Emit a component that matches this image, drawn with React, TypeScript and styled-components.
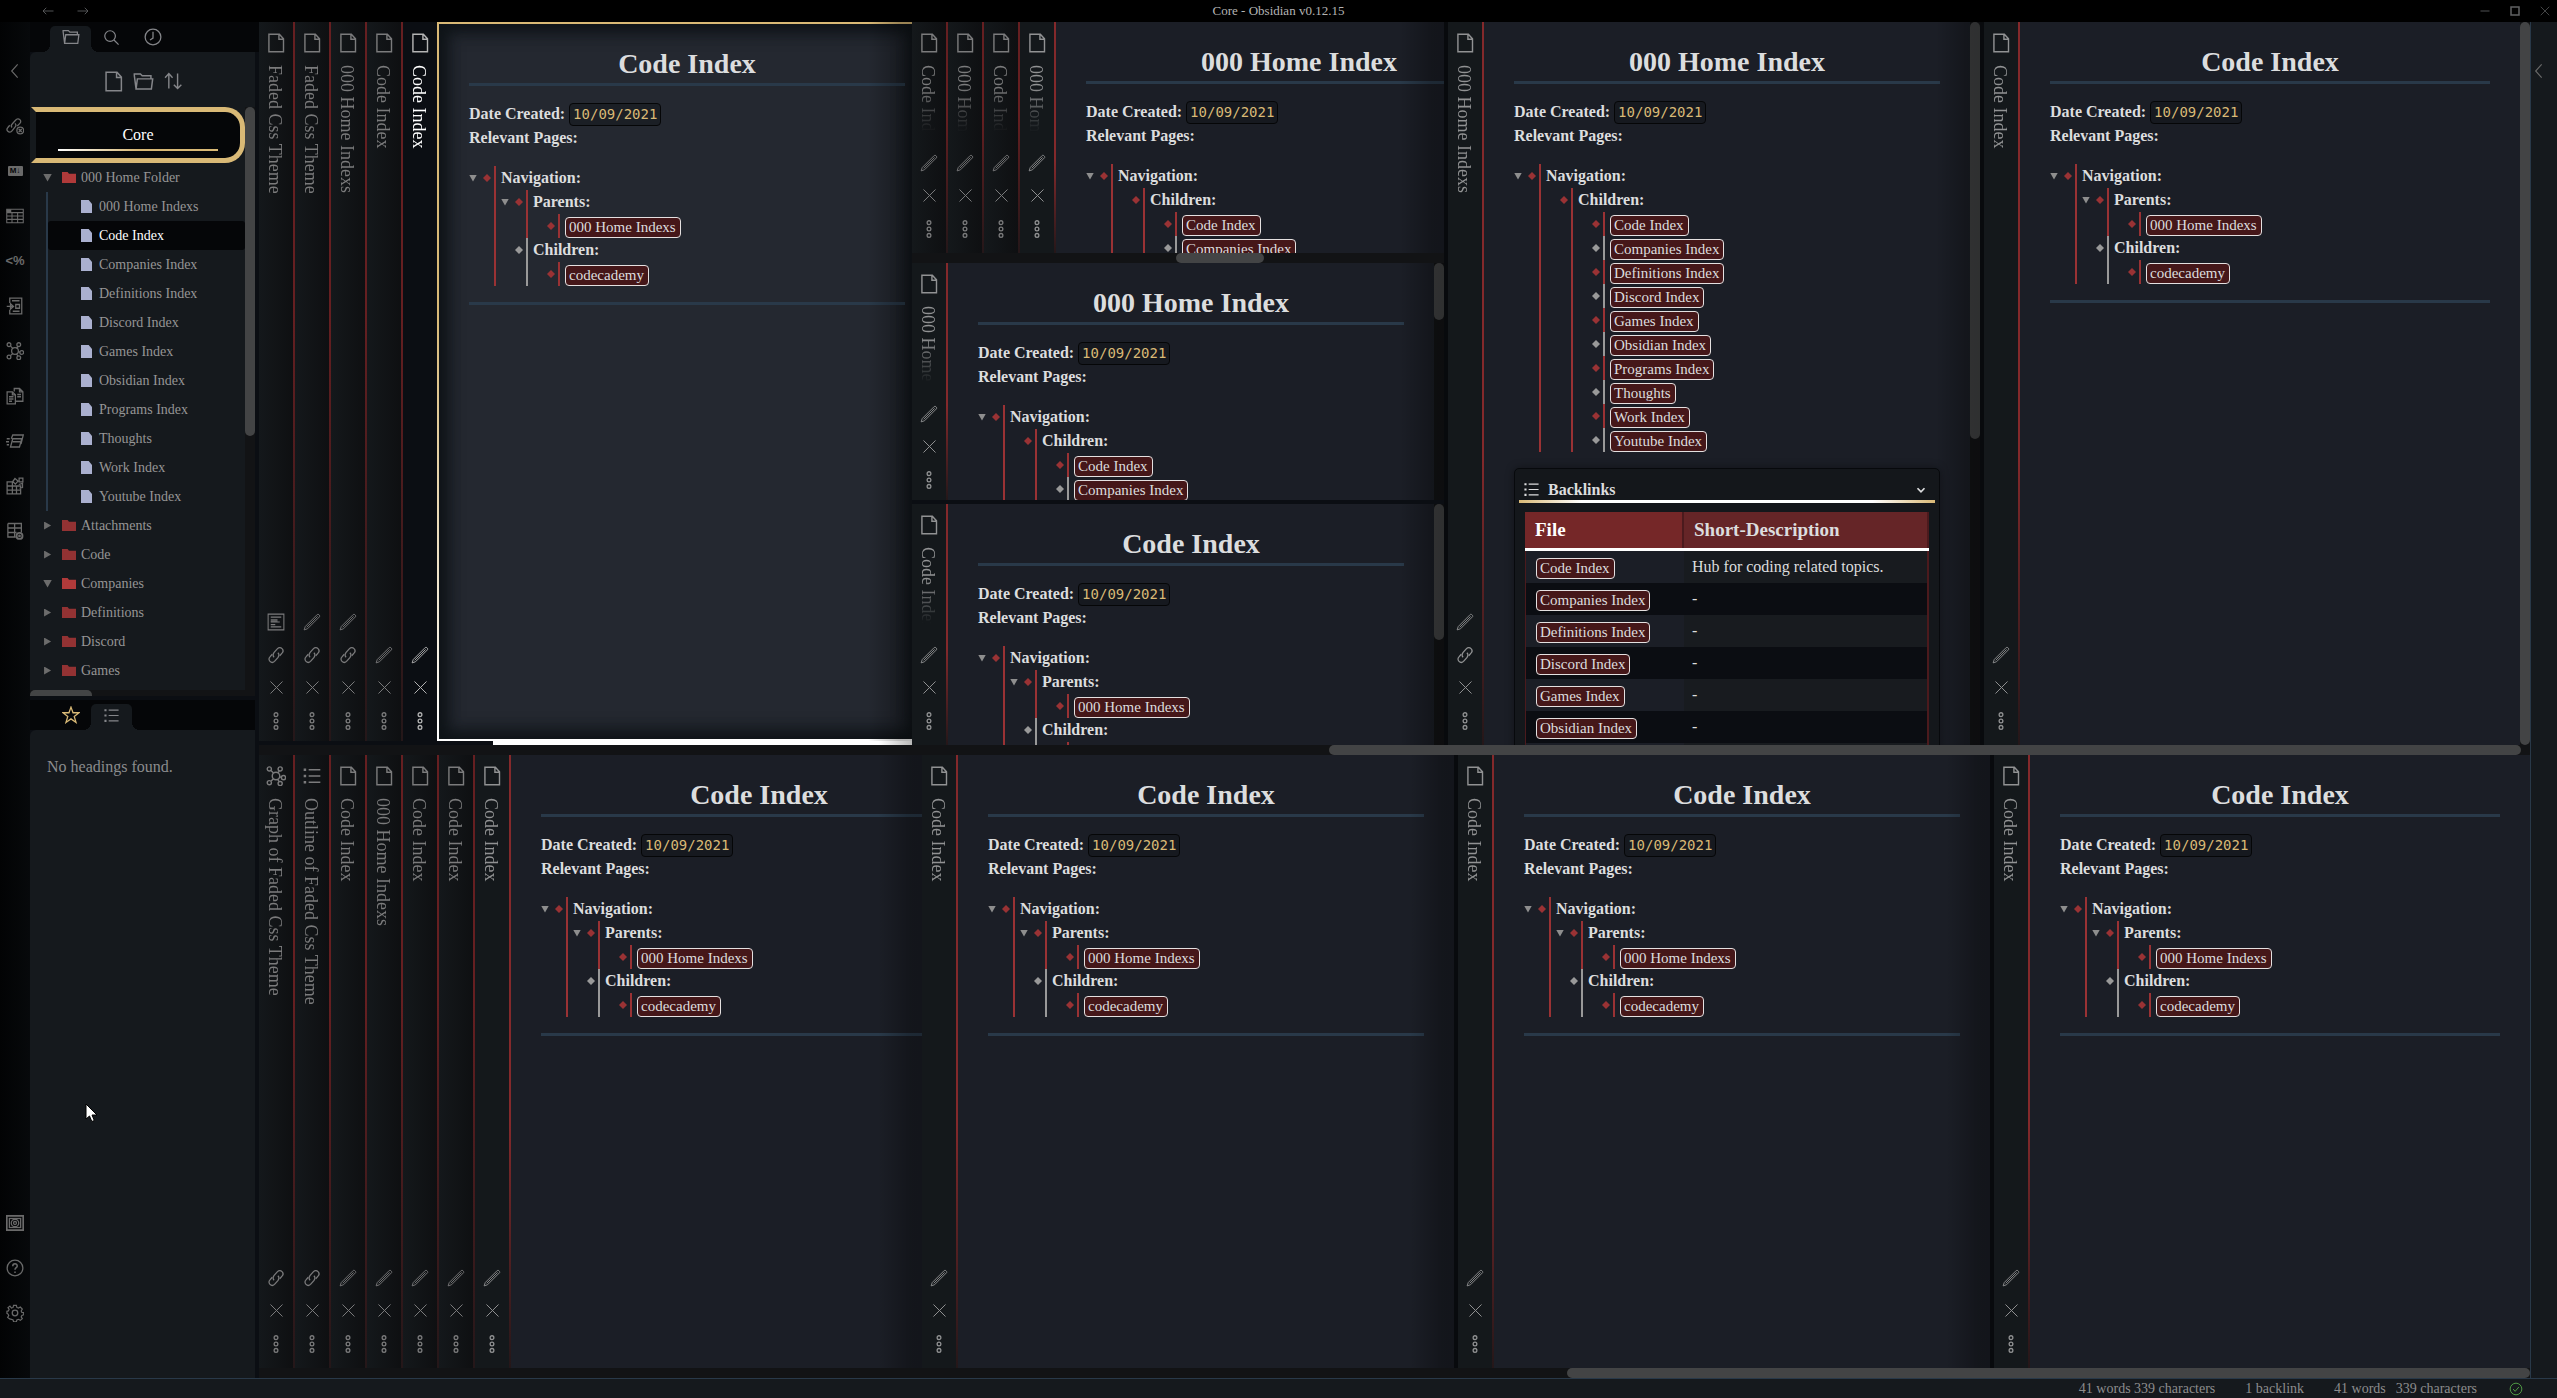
import React from "react";
import styled, { createGlobalStyle, css } from "styled-components";

const c = {
  black: "#000000",
  deep: "#050608",
  gutter: "#0b0e13",
  panel: "#15191d",
  spine: "#14181b",
  note: "#1b1e26",
  noteActive: "#242830",
  track: "#121315",
  thumb: "#434445",
  gold: "#d9b976",
  red: "#9a3234",
  slate: "#293949",
  text: "#dcddde",
  muted: "#8d8d8d",
  faint: "#606163",
};

const Global = createGlobalStyle`
  * { box-sizing: border-box; }
  html, body { margin: 0; height: 100%; background: ${c.black}; overflow: hidden; }
  body { font-family: "Liberation Serif", "Times New Roman", serif; font-size: 16px; line-height: 24px; color: ${c.text}; }
  h1, h2, p, ul { margin: 0; padding: 0; font-size: inherit; }
  ul { list-style: none; }
`;

const bare = css`
  margin: 0;
  padding: 0;
  border: 0;
  background: none;
  font: inherit;
  color: inherit;
  cursor: pointer;
`;

/* ---------- icons ---------- */

const shapes: Record<string, React.ReactNode> = {
  doc: <path d="M3.500 1.500h12.500L21 7V22.500H3.500zM15.500 1.500v6H21" />,
  folder: <path d="M3.500 20.500L1.500 5V3.500h7l2 2H20.500v3.500M3.500 20.500L5 9H22.500l-1.500 11.500z" />,
  search: (
    <>
      <circle cx="10" cy="10" r="7.500" />
      <path d="M15.500 15.500L22 22" />
    </>
  ),
  clock: (
    <>
      <circle cx="12" cy="12" r="10.500" />
      <path d="M12 5v8.500l-4 2.500" />
    </>
  ),
  sort: <path d="M7 21V3M2.500 8L7 3l4.500 5M17.500 3v18M13 16.500l4.500 4.500 4.500-4.500" />,
  star: <path d="M12 1.500l2.700 7.500h8l-6.400 4.900 2.400 8L12 17.200l-6.700 4.700 2.400-8L1.300 9h8z" />,
  list: (
    <>
      <path d="M8 4.500h14M8 12h14M8 19.500h14" />
      <path d="M2 4.500h3M2 12h3M2 19.500h3" strokeWidth="3" />
    </>
  ),
  pencil: <path d="M1.500 22.500l1.500-4.500L19 2c1.300-1.300 4.300 1.700 3 3L6 21zM5 19L19.500 4.500" strokeWidth="1.200" />,
  link: (
    <>
      <path d="M9.500 15c-2-2-1.500-4.500 0-6.500l4.500-5c2-2 4.500-1.500 6 0s2 4 0 6l-3 3.500" />
      <path d="M14.500 9c2 2 1.500 4.500 0 6.500l-4.500 5c-2 2-4.500 1.500-6 0s-2-4 0-6l3-3.500" />
    </>
  ),
  close: <path d="M3.500 3.500l17 17M20.500 3.500l-17 17" strokeWidth="1.400" />,
  dots: (
    <>
      <circle cx="12" cy="3.500" r="2.500" />
      <circle cx="12" cy="12" r="2.500" />
      <circle cx="12" cy="20.500" r="2.500" />
    </>
  ),
  reading: (
    <>
      <path d="M1.500 1.500h21v21h-21zM5 5.500h14M5 18.500h14M5 15.500h6M5 12h12" strokeWidth="1.400" />
      <path d="M5 10h9" strokeWidth="4" opacity="0.700" />
    </>
  ),
  graph: (
    <>
      <circle cx="12" cy="12" r="4.500" />
      <circle cx="4" cy="3.500" r="2.500" />
      <circle cx="17" cy="3.500" r="2.500" />
      <circle cx="21" cy="14" r="2.500" />
      <circle cx="17" cy="21" r="2.500" />
      <circle cx="4" cy="20" r="2.500" />
      <path d="M6 5.500l3 3M16 6l-2 2.500M16.500 13l2 .500M14 16l2 3M9 15.500L6 18" />
    </>
  ),
  chevron: <path d="M16 2L7 12l9 10" />,
  unlink: (
    <>
      <path d="M8 14c-1.500-1.500-1-3.500.5-5L13 4c1.500-2 4-2 5.500-.5s1.500 3.500 0 5L15 12" />
      <path d="M12 8.500c1.500 1.500 1.500 3.500 0 5L8 18.500c-1.500 2-4 2-5.500.5s-1.500-3.500 0-5L5 11" />
      <circle cx="19" cy="18" r="4.500" />
      <path d="M17 16l4 4M21 16l-4 4" />
    </>
  ),
  table: (
    <>
      <path d="M1 3h22v18H1zM1 7.500h22M1 12h22M1 16.500h22M8 7v14M15.500 7v14" strokeWidth="1.400" />
      <path d="M1 5.200h6" strokeWidth="4" />
    </>
  ),
  importer: (
    <>
      <path d="M5 8V1.500h16v21H5V17M8 5h10M9 19h9" />
      <path d="M1 12.500h8M6 9l4 3.500L6 16zM13 10h5v5h-5z" />
    </>
  ),
  copies: <path d="M1.500 6.500h7l4 4v12h-11zM8.500 6.500v4h4M11 6V2h7l4.500 4.500V19H13M18 2v4.500h4.500M4 13h6M4 16h6M4 19h4M15 10h5M15 13h5" />,
  cards: <path d="M7 9l2-5h14l-3 12M6 20l3-11h12l-3 11zM9 13h10M1 9h4M0 13h4M1 17h3" />,
  blocks: <path d="M1.500 6.500h7v16h-7zM1.500 12h18v10.500h-18zM1.500 17.500h18M8.500 12v10.500M14 12v10.500M12 2l4 3.500-3.500 4L9 6zM17.500 1.500h5v5h-5zM17 10l5-1.500V14l-4 1" />,
  gridGear: (
    <>
      <path d="M2.500 2h18v12M2.500 2v18H13M2.500 8h18M2.500 14H14M11.500 2v18" />
      <circle cx="18" cy="18.500" r="4" strokeWidth="2.500" />
      <circle cx="18" cy="18.500" r="1" />
    </>
  ),
  vault: (
    <>
      <rect x="1" y="2.500" width="22" height="19" strokeWidth="2.400" />
      <rect x="4.500" y="6" width="15" height="12" />
      <circle cx="12" cy="12" r="5" />
      <circle cx="12" cy="12" r="2" />
    </>
  ),
  help: (
    <>
      <circle cx="12" cy="12" r="10.500" />
      <path d="M9 9.500C9 5.500 15 5.500 15 9.200c0 2.300-3 2.300-3 5M12 16.500v2" strokeWidth="2" />
    </>
  ),
  gear: (
    <>
      <path d="M10 1.500h4l.7 3 2.300 1 2.700-1.500 2.800 2.800-1.600 2.700 1 2.300 2.600.200v3l-2.600 1-1 2 1.600 2.700-2.800 2.300-2.700-1.500-2.300 1-.7 2.500h-4l-.7-2.500-2.300-1L4.300 21l-2.800-2.300L3.100 16l-1-2L.500 13v-3l2.100-.500 1-2.200L2 4.800 4.800 2.500 7 5.500l2.300-1z" transform="translate(.8 .4) scale(.93)" />
      <circle cx="12" cy="12" r="3.700" />
    </>
  ),
  back: <path d="M23 12H2M8.500 5.500L2 12l6.500 6.500" />,
  forward: <path d="M1 12h21M15.500 5.500L22 12l-6.500 6.500" />,
  minimise: <path d="M3 12h18" />,
  maximise: <path d="M4 4h16v16H4z" strokeWidth="3" />,
  down: <path d="M5 8.500l7 7 7-7" strokeWidth="3.500" />,
  check: (
    <>
      <circle cx="12" cy="12" r="10" />
      <path d="M7 12l3.500 4L17 8.500" />
    </>
  ),
};

const Glyph = styled.svg`
  display: block;
  flex: none;
  fill: none;
  stroke: currentColor;
  stroke-width: 1.7;
`;

const Icon = ({ name, size = 18 }: { name: string; size?: number }) => (
  <Glyph viewBox="0 0 24 24" width={size} height={size} aria-hidden="true">
    {shapes[name]}
  </Glyph>
);

/* ---------- frame ---------- */

const Shell = styled.div`
  height: 100vh;
  display: flex;
  flex-direction: column;
  background: ${c.gutter};
`;

const TitleBar = styled.header`
  flex: none;
  height: 22px;
  display: grid;
  grid-template-columns: 1fr auto 1fr;
  align-items: center;
  background: ${c.black};
  color: ${c.faint};
`;

const TitleText = styled.h1`
  font-size: 13px;
  line-height: 22px;
  font-weight: 400;
  color: #b4b4b4;
`;

const BarGroup = styled.div<{ $end?: boolean }>`
  display: flex;
  gap: ${(p) => (p.$end ? 18 : 23)}px;
  padding: ${(p) => (p.$end ? "0 6px" : "0 42px")};
  justify-content: ${(p) => (p.$end ? "flex-end" : "flex-start")};
`;

const IconButton = styled.button`
  ${bare}
  display: grid;
  place-items: center;
`;

const Middle = styled.div`
  flex: 1;
  min-height: 0;
  display: flex;
`;

const Ribbon = styled.nav`
  flex: none;
  width: 30px;
  display: flex;
  flex-direction: column;
  padding: 26px 0 43px;
  background: linear-gradient(to right, #020304, #07090b);
  color: #6a6a6a;
`;

const RibbonButton = styled(IconButton)`
  height: 45px;
  font-family: "Liberation Sans", Arial, sans-serif;
  font-size: 13px;
  font-weight: 700;
`;

const RibbonTop = styled.div`
  display: flex;
  flex-direction: column;
  margin-bottom: 10px;
`;

const Spacer = styled.div`
  flex: 1;
`;

const MdBadge = styled.span`
  width: 15px;
  height: 10px;
  border-radius: 1px;
  background: #6a6a6a;
  color: ${c.deep};
  font-size: 8px;
  line-height: 10px;
`;

const RightRibbon = styled.nav`
  flex: none;
  width: 27px;
  padding-top: 26px;
  border-left: 1px solid ${c.slate};
  background: ${c.panel};
  color: #6a6a6a;
`;

/* ---------- sidebar ---------- */

const Sidebar = styled.aside`
  flex: none;
  width: 229px;
  display: flex;
  flex-direction: column;
  gap: 4px;
  background: ${c.gutter};
`;

const SidePanel = styled.section<{ $grow: number }>`
  flex: ${(p) => p.$grow} 1 0;
  min-height: 0;
  display: flex;
  flex-direction: column;
`;

const Tabs = styled.div<{ $wide?: boolean }>`
  flex: none;
  height: 30px;
  margin-right: ${(p) => (p.$wide ? 0 : 4)}px;
  padding: 4px 20px 0;
  display: flex;
  background: ${c.deep};
`;

const Tab = styled(IconButton)<{ $on?: boolean; $gold?: boolean }>`
  position: relative;
  width: 41px;
  height: 26px;
  padding-bottom: 4px;
  border-radius: 5px 5px 0 0;
  color: ${(p) => (p.$gold ? c.gold : "#85868a")};
  ${(p) =>
    p.$on &&
    css`
      background: ${c.panel};
      &::before,
      &::after {
        content: "";
        position: absolute;
        bottom: 0;
        width: 8px;
        height: 8px;
      }
      &::before {
        right: 100%;
        background: radial-gradient(circle at 0 0, transparent 8px, ${c.panel} 8px);
      }
      &::after {
        left: 100%;
        background: radial-gradient(circle at 100% 0, transparent 8px, ${c.panel} 8px);
      }
    `}
`;

const PanelBody = styled.div`
  flex: 1;
  min-height: 0;
  margin-right: 4px;
  display: flex;
  flex-direction: column;
  border-radius: 6px 0 0 0;
  background: ${c.panel};
`;

const ExplorerTools = styled.div`
  flex: none;
  height: 55px;
  display: flex;
  justify-content: center;
  align-items: center;
  gap: 9px;
  padding-top: 3px;
  color: #85868a;
`;

const Explorer = styled.div`
  flex: 1;
  min-height: 0;
  display: flex;
`;

const Tree = styled.div`
  flex: 1;
  min-width: 0;
  overflow: hidden;
  font-size: 14px;
  line-height: 29px;
  color: #959595;
`;

const VaultName = styled.h2`
  height: 56px;
  margin-left: 1px;
  padding: 14px 22px 0;
  border: 5px solid ${c.gold};
  border-left-color: transparent;
  border-radius: 0 20px 20px 0;
  background: ${c.deep} padding-box;
  color: #ffffff;
  font-size: 16px;
  font-weight: 400;
  line-height: 18px;
  text-align: center;
  display: flex;
  flex-direction: column;
  gap: 5px;
  &::after {
    content: "";
    height: 2px;
    background: linear-gradient(to right, #ffffff, ${c.gold} 50%, ${c.gold});
  }
`;

const Row = styled.button<{ $active?: boolean }>`
  ${bare}
  width: 100%;
  height: 29px;
  display: flex;
  align-items: center;
  text-align: left;
  border-radius: 3px;
  ${(p) => p.$active && `background: ${c.deep}; color: #ffffff;`}
`;

const FolderRow = styled(Row)`
  padding-left: 13px;
`;

const FileRow = styled(Row)`
  gap: 7px;
  padding-left: 33px;
`;

const Children = styled.ul`
  margin-left: 16px;
  border-left: 2px solid ${c.slate};
`;

const Caret = styled.span<{ $open?: boolean }>`
  flex: none;
  width: 9px;
  height: 8px;
  background: #6c6c6c;
  clip-path: ${(p) => (p.$open ? "polygon(0 0, 100% 0, 50% 100%)" : "polygon(12% 0, 90% 50%, 12% 100%)")};
`;

const FolderIcon = styled.span<{ $open?: boolean }>`
  flex: none;
  width: 14px;
  height: 11px;
  margin: 0 5px 0 10px;
  background: ${(p) => (p.$open ? "#b03a3a" : "#933233")};
  clip-path: polygon(0 0, 40% 0, 50% 15%, 100% 15%, 100% 100%, 0 100%);
`;

const FileIcon = styled.span`
  flex: none;
  width: 11px;
  height: 13px;
  background: #aab0cf;
  clip-path: polygon(0 0, 70% 0, 100% 30%, 100% 100%, 0 100%);
`;

const Empty = styled.p`
  padding: 25px 17px;
  color: #8b8c8e;
`;

/* ---------- scrollbars ---------- */

const VTrack = styled.div`
  flex: none;
  width: 10px;
  background: ${c.track};
`;

const VThumb = styled.div<{ $size: string }>`
  height: ${(p) => p.$size};
  border-radius: 5px;
  background: ${c.thumb};
`;

const HTrack = styled.div<{ $h?: number }>`
  flex: none;
  display: flex;
  height: ${(p) => p.$h ?? 10}px;
  overflow: hidden;
  background: ${c.track};
`;

const HThumb = styled.div<{ $from: string; $size: string }>`
  height: 10px;
  width: ${(p) => p.$size};
  margin-left: ${(p) => p.$from};
  border-radius: 5px;
  background: ${c.thumb};
`;

/* ---------- workspace ---------- */

const Workspace = styled.main`
  flex: 1;
  min-width: 0;
  display: flex;
  flex-direction: column;
`;

const Band = styled.div<{ $grow: number; $columns: string }>`
  flex: ${(p) => p.$grow} 1 0;
  min-height: 0;
  display: grid;
  grid-template-columns: ${(p) => p.$columns};
  grid-template-rows: minmax(0, 1fr);
`;

const Column = styled.div<{ $ruled?: boolean }>`
  min-width: 0;
  min-height: 0;
  display: flex;
  flex-direction: column;
  border-right: ${(p) => (p.$ruled ? `4px solid #080a0d` : "0")};
`;

const Pane = styled.section<{ $grow?: number; $shade?: boolean }>`
  position: relative;
  flex: ${(p) => p.$grow ?? 1} 1 0;
  min-height: 0;
  min-width: 0;
  display: flex;
  overflow: hidden;
  ${(p) =>
    p.$shade &&
    css`
      &::after {
        content: "";
        position: absolute;
        inset: 0 0 0 auto;
        width: 44px;
        pointer-events: none;
        background: linear-gradient(to right, transparent, rgba(0, 0, 0, 0.28) 70%, rgba(0, 0, 0, 0.3));
      }
    `}
`;

const SpineBox = styled.header<{ $kind: "stacked" | "open" | "active"; $tight?: boolean }>`
  flex: none;
  width: ${(p) => (p.$kind === "active" ? 34 : 36)}px;
  padding: 11px 2px ${(p) => (p.$tight ? 4 : 8)}px 0;
  display: flex;
  flex-direction: column;
  align-items: center;
  color: ${(p) => (p.$kind === "stacked" ? "#7b7b7c" : "#919293")};
  background: ${(p) =>
    p.$kind === "active"
      ? c.gutter
      : p.$kind === "open"
        ? `linear-gradient(#84292b 60%, #241719) right / 2px 100% no-repeat, ${c.spine}`
        : `linear-gradient(#661f21 40%, #241719) right / 2px 100% no-repeat, linear-gradient(to right, ${c.spine}, #0e0f11)`};
  ${(p) => p.$kind === "active" && "padding-right: 0; color: #b4b4b4;"}
`;

const SpineTitle = styled.h2<{ $active?: boolean }>`
  flex: 1;
  min-height: 0;
  margin-top: 12px;
  padding-right: 2px;
  overflow: hidden;
  writing-mode: vertical-rl;
  white-space: nowrap;
  font-size: 18px;
  line-height: 22px;
  font-weight: 400;
  ${(p) => p.$active && "color: #ffffff;"}
  mask-image: linear-gradient(to bottom, #000 calc(100% - 60px), transparent calc(100% - 14px));
`;

const SpineButton = styled(IconButton)`
  width: 34px;
  height: 33px;
`;

type SpineProps = { title: string; kind?: "stacked" | "open" | "active"; icon?: string; actions?: string[]; tight?: boolean };

const Spine = ({ title, kind = "stacked", icon = "doc", actions = ["pencil"], tight }: SpineProps) => (
  <SpineBox $kind={kind} $tight={tight}>
    <Icon name={icon} size={20} />
    <SpineTitle $active={kind === "active"}>{title}</SpineTitle>
    {[...actions, "close", "dots"].map((a) => (
      <SpineButton key={a} aria-label={a}>
        <Icon name={a} size={a === "close" ? 17 : 18} />
      </SpineButton>
    ))}
  </SpineBox>
);

const Body = styled.div<{ $active?: boolean }>`
  flex: 1;
  min-width: 0;
  overflow: hidden;
  background: ${c.note};
  ${(p) =>
    p.$active &&
    css`
      border: 2px solid;
      border-right: 0;
      border-image: linear-gradient(${c.gold} 40%, #ffffff) 1;
      background: ${c.noteActive};
      box-shadow: inset 6px 0 18px #0f1418, inset 0 -6px 18px #0f1418, inset 0 6px 18px #0f1418;
    `}
`;

const Doc = styled.article<{ $min: number }>`
  min-width: ${(p) => p.$min}px;
  padding: 22px 30px 0;
`;

const DocTitle = styled.h1`
  margin-bottom: 16px;
  padding-bottom: 1px;
  border-bottom: 3px solid ${c.slate};
  font-size: 28px;
  line-height: 36px;
  font-weight: 700;
  text-align: center;
`;

const Strong = styled.strong`
  display: block;
  height: 24px;
  white-space: nowrap;
`;

const DateCode = styled.code`
  display: inline-block;
  height: 23px;
  margin-top: 1px;
  padding: 0 3px;
  border: 1px solid #050607;
  border-radius: 4px;
  background: rgba(16, 18, 22, 0.4);
  color: ${c.gold};
  font-family: "DejaVu Sans Mono", monospace;
  font-size: 14px;
  line-height: 21px;
  font-weight: 400;
  vertical-align: top;
`;

const Rule = styled.hr`
  height: 3px;
  margin: 16px 0 0;
  border: 0;
  background: ${c.slate};
`;

const Outline = styled.ul`
  margin-top: 16px;
`;

const Item = styled.li`
  display: grid;
  grid-template-columns: 25px 1fr;
`;

const Gutter = styled.span<{ $odd: boolean }>`
  height: 24px;
  display: flex;
  align-items: center;
  &::after {
    content: "";
    width: 8px;
    height: 8px;
    margin-left: auto;
    margin-right: 3px;
    background: ${(p) => (p.$odd ? c.red : "#999999")};
    clip-path: polygon(50% 0, 100% 50%, 50% 100%, 0 50%);
  }
`;

const Fold = styled.span`
  width: 8px;
  height: 7px;
  background: #8e8e8e;
  clip-path: polygon(0 0, 100% 0, 50% 100%);
`;

const Branch = styled.div<{ $odd: boolean }>`
  min-width: 0;
  padding-left: 5px;
  border-left: 2px solid ${(p) => (p.$odd ? c.red : "#999999")};
`;

const LinkRow = styled.span`
  display: block;
  height: 24px;
  padding-top: 3px;
`;

const Chip = styled.a`
  display: block;
  width: fit-content;
  padding: 0 4px 0 3px;
  border: 1px solid #e4e0e0;
  border-radius: 4px;
  background: #451719;
  color: ${c.text};
  font-size: 15px;
  line-height: 19px;
  text-decoration: none;
  white-space: nowrap;
`;

type Node = { label: string; link?: boolean; fold?: boolean; kids?: Node[] };

const Nodes = ({ items }: { items: Node[] }) => (
  <>
    {items.map((n, i) => {
      const odd = i % 2 === 0;
      return (
        <Item key={n.label}>
          <Gutter $odd={odd}>{n.fold && <Fold />}</Gutter>
          <Branch $odd={odd}>
            {n.link ? (
              <LinkRow>
                <Chip href="#">{n.label}</Chip>
              </LinkRow>
            ) : (
              <Strong>{n.label}</Strong>
            )}
            {n.kids && (
              <ul>
                <Nodes items={n.kids} />
              </ul>
            )}
          </Branch>
        </Item>
      );
    })}
  </>
);

const pages = [
  "Code Index",
  "Companies Index",
  "Definitions Index",
  "Discord Index",
  "Games Index",
  "Obsidian Index",
  "Programs Index",
  "Thoughts",
  "Work Index",
  "Youtube Index",
];

const codeTree: Node[] = [
  {
    label: "Navigation:",
    fold: true,
    kids: [
      { label: "Parents:", fold: true, kids: [{ label: "000 Home Indexs", link: true }] },
      { label: "Children:", kids: [{ label: "codecademy", link: true }] },
    ],
  },
];

const homeTree: Node[] = [
  { label: "Navigation:", fold: true, kids: [{ label: "Children:", kids: pages.map((label) => ({ label, link: true })) }] },
];

/* ---------- backlinks ---------- */

const Card = styled.section`
  margin-top: 16px;
  padding: 10px 4px 0;
  border: 1px solid #07090c;
  border-radius: 5px;
  background: #14171b;
  box-shadow: 0 0 8px rgba(0, 0, 0, 0.4);
`;

const CardHead = styled.h2`
  display: flex;
  align-items: center;
  gap: 8px;
  height: 24px;
  margin-bottom: 9px;
  padding: 0 8px 3px 4px;
  line-height: 21px;
  background: linear-gradient(to right, ${c.gold}, #ffffff 15%, #ffffff 85%, ${c.gold}) bottom / 100% 3px no-repeat;
`;

const Fill = styled.span`
  flex: 1;
`;

const Table = styled.table`
  width: calc(100% - 12px);
  margin: 0 6px;
  border-collapse: separate;
  border-spacing: 0;
  table-layout: fixed;
  th {
    height: 39px;
    padding: 0 10px;
    border-bottom: 3px solid #ffffff;
    background: #652527 linear-gradient(#4b1a1d, #4b1a1d) right / 2px 100% no-repeat;
    font-size: 19px;
    line-height: 36px;
    text-align: left;
  }
  th:first-child {
    width: 159px;
    background-color: #752728;
    color: #ffffff;
  }
  td {
    height: 32px;
    padding: 4px 8px;
    background: #181b1f;
    vertical-align: top;
  }
  td:first-child {
    padding-left: 10px;
    border-left: 1px solid #4b1a1d;
    background: ${c.note};
  }
  td:last-child {
    border-right: 2px solid #4b1a1d;
  }
  tbody tr:nth-child(even) td {
    background: #0b0d12;
  }
`;

const Backlinks = () => (
  <Card>
    <CardHead>
      <Icon name="list" size={17} />
      Backlinks
      <Fill />
      <Icon name="down" size={12} />
    </CardHead>
    <Table>
      <thead>
        <tr>
          <th>File</th>
          <th>Short-Description</th>
        </tr>
      </thead>
      <tbody>
        {pages.slice(0, 7).map((p, i) => (
          <tr key={p}>
            <td>
              <LinkRow>
                <Chip href="#">{p}</Chip>
              </LinkRow>
            </td>
            <td>{i === 0 ? "Hub for coding related topics." : "-"}</td>
          </tr>
        ))}
      </tbody>
    </Table>
  </Card>
);

const Note = ({ home, min = 496, links }: { home?: boolean; min?: number; links?: boolean }) => (
  <Doc $min={min}>
    <DocTitle>{home ? "000 Home Index" : "Code Index"}</DocTitle>
    <Strong>
      Date Created: <DateCode>10/09/2021</DateCode>
    </Strong>
    <Strong>Relevant Pages:</Strong>
    <Outline>
      <Nodes items={home ? homeTree : codeTree} />
    </Outline>
    {links ? <Backlinks /> : <Rule />}
  </Doc>
);

const Divider = styled.div`
  flex: none;
  height: 4px;
  background: ${c.gutter};
`;

const ActiveEdge = styled(Divider)`
  padding-left: 234px;
  &::before {
    content: "";
    display: block;
    height: 4px;
    background: linear-gradient(to right, #ffffff 92%, #b9b9b9);
  }
`;

/* ---------- status ---------- */

const Status = styled.footer`
  flex: none;
  height: 20px;
  display: flex;
  justify-content: flex-end;
  align-items: center;
  gap: 30px;
  padding-right: 34px;
  border-top: 1px solid ${c.slate};
  background: ${c.panel};
  color: ${c.muted};
  font-size: 14px;
  line-height: 19px;
`;

const Counts = styled.span`
  display: flex;
  gap: 10px;
  margin-right: 2px;
`;

const Ok = styled.span`
  color: #4f9a44;
`;

const Pointer = styled.svg`
  position: fixed;
  left: 85px;
  top: 1103px;
`;

const folders: [string, boolean][] = [
  ["Attachments", false],
  ["Code", false],
  ["Companies", true],
  ["Definitions", false],
  ["Discord", false],
  ["Games", false],
];

const Folder = ({ name, open }: { name: string; open?: boolean }) => (
  <FolderRow aria-expanded={open}>
    <Caret $open={open} />
    <FolderIcon $open={open} />
    {name}
  </FolderRow>
);

const ribbonIcons = ["graph", "copies", "cards", "blocks", "gridGear"];

export default function App() {
  return (
    <Shell>
      <Global />
      <TitleBar>
        <BarGroup>
          <IconButton aria-label="Back"><Icon name="back" size={12} /></IconButton>
          <IconButton aria-label="Forward"><Icon name="forward" size={12} /></IconButton>
        </BarGroup>
        <TitleText>Core - Obsidian v0.12.15</TitleText>
        <BarGroup $end>
          {["minimise", "maximise", "close"].map((n) => (
            <IconButton key={n} aria-label={n}><Icon name={n} size={12} /></IconButton>
          ))}
        </BarGroup>
      </TitleBar>

      <Middle>
        <Ribbon>
          <RibbonTop>
            <RibbonButton aria-label="Collapse"><Icon name="chevron" size={16} /></RibbonButton>
          </RibbonTop>
          <RibbonButton aria-label="Unlinked files"><Icon name="unlink" /></RibbonButton>
          <RibbonButton aria-label="Markdown"><MdBadge>M↓</MdBadge></RibbonButton>
          <RibbonButton aria-label="Table"><Icon name="table" /></RibbonButton>
          <RibbonButton aria-label="Templates">&lt;%</RibbonButton>
          <RibbonButton aria-label="Import"><Icon name="importer" /></RibbonButton>
          {ribbonIcons.map((n) => (
            <RibbonButton key={n} aria-label={n}><Icon name={n} /></RibbonButton>
          ))}
          <Spacer />
          {["vault", "help", "gear"].map((n) => (
            <RibbonButton key={n} aria-label={n}><Icon name={n} /></RibbonButton>
          ))}
        </Ribbon>

        <Sidebar>
          <SidePanel $grow={674}>
            <Tabs $wide>
              <Tab $on aria-label="Files"><Icon name="folder" /></Tab>
              <Tab aria-label="Search"><Icon name="search" size={17} /></Tab>
              <Tab aria-label="Recent"><Icon name="clock" /></Tab>
            </Tabs>
            <PanelBody>
              <ExplorerTools>
                <IconButton aria-label="New note"><Icon name="doc" size={21} /></IconButton>
                <IconButton aria-label="New folder"><Icon name="folder" size={21} /></IconButton>
                <IconButton aria-label="Sort"><Icon name="sort" size={20} /></IconButton>
              </ExplorerTools>
              <Explorer>
                <Tree>
                  <VaultName>Core</VaultName>
                  <Folder name="000 Home Folder" open />
                  <Children>
                    {["000 Home Indexs", ...pages].map((p) => (
                      <li key={p}>
                        <FileRow $active={p === "Code Index"}>
                          <FileIcon />
                          {p}
                        </FileRow>
                      </li>
                    ))}
                  </Children>
                  {folders.map(([name, open]) => (
                    <Folder key={name} name={name} open={open} />
                  ))}
                </Tree>
                <VTrack><VThumb $size="56.5%" /></VTrack>
              </Explorer>
              <HTrack $h={6}><HThumb $from="0" $size="62px" /></HTrack>
            </PanelBody>
          </SidePanel>
          <SidePanel $grow={678}>
            <Tabs>
              <Tab $gold aria-label="Starred"><Icon name="star" /></Tab>
              <Tab $on aria-label="Outline"><Icon name="list" size={17} /></Tab>
            </Tabs>
            <PanelBody>
              <Empty>No headings found.</Empty>
            </PanelBody>
          </SidePanel>
        </Sidebar>

        <Workspace>
          <Band $grow={723} $columns="minmax(0, 653fr) minmax(0, 536fr) minmax(0, 536fr) minmax(0, 536fr) 10px">
            <Column>
              <Pane $shade>
                <Spine title="Faded Css Theme" actions={["reading", "link"]} tight />
                <Spine title="Faded Css Theme" actions={["pencil", "link"]} tight />
                <Spine title="000 Home Indexs" actions={["pencil", "link"]} tight />
                <Spine title="Code Index" tight />
                <Spine title="Code Index" kind="active" tight />
                <Body $active><Note /></Body>
              </Pane>
              <ActiveEdge />
            </Column>
            <Column $ruled>
              <Pane $grow={231} $shade>
                <Spine title="Code Index" />
                <Spine title="000 Home Indexs" />
                <Spine title="Code Index" />
                <Spine title="000 Home Indexs" kind="open" />
                <Body><Note home min={486} /></Body>
              </Pane>
              <HTrack><HThumb $from="49.6%" $size="88px" /></HTrack>
              <Pane $grow={237} $shade>
                <Spine title="000 Home Indexs" kind="open" tight />
                <Body><Note home min={486} /></Body>
                <VTrack><VThumb $size="24%" /></VTrack>
              </Pane>
              <Divider />
              <Pane $grow={241} $shade>
                <Spine title="Code Index" kind="open" />
                <Body><Note min={486} /></Body>
                <VTrack><VThumb $size="56.5%" /></VTrack>
              </Pane>
            </Column>
            <Column $ruled>
              <Pane $shade>
                <Spine title="000 Home Indexs" kind="open" actions={["pencil", "link"]} />
                <Body><Note home min={486} links /></Body>
                <VTrack><VThumb $size="57.7%" /></VTrack>
              </Pane>
            </Column>
            <Column>
              <Pane>
                <Spine title="Code Index" kind="open" />
                <Body><Note /></Body>
              </Pane>
            </Column>
            <VTrack><VThumb $size="100%" /></VTrack>
          </Band>
          <HTrack><HThumb $from="47.1%" $size="52.5%" /></HTrack>
          <Band $grow={613} $columns="minmax(0, 663fr) minmax(0, 536fr) minmax(0, 536fr) minmax(0, 536fr)">
            <Column>
              <Pane $shade>
                <Spine title="Graph of Faded Css Theme" icon="graph" actions={["link"]} />
                <Spine title="Outline of Faded Css Theme" icon="list" actions={["link"]} />
                <Spine title="Code Index" />
                <Spine title="000 Home Indexs" />
                <Spine title="Code Index" />
                <Spine title="Code Index" />
                <Spine title="Code Index" kind="open" />
                <Body><Note /></Body>
              </Pane>
            </Column>
            <Column $ruled>
              <Pane $shade>
                <Spine title="Code Index" kind="open" />
                <Body><Note /></Body>
              </Pane>
            </Column>
            <Column $ruled>
              <Pane $shade>
                <Spine title="Code Index" kind="open" />
                <Body><Note /></Body>
              </Pane>
            </Column>
            <Column>
              <Pane>
                <Spine title="Code Index" kind="open" />
                <Body><Note /></Body>
              </Pane>
            </Column>
          </Band>
          <HTrack><HThumb $from="57.6%" $size="42.4%" /></HTrack>
        </Workspace>

        <RightRibbon>
          <RibbonButton aria-label="Expand"><Icon name="chevron" size={16} /></RibbonButton>
        </RightRibbon>
      </Middle>

      <Status>
        <span>41 words 339 characters</span>
        <span>1 backlink</span>
        <Counts>
          <span>41 words</span>
          <span>339 characters</span>
        </Counts>
        <Ok><Icon name="check" size={14} /></Ok>
      </Status>

      <Pointer width="13" height="20" viewBox="0 0 13 20" aria-hidden="true">
        <path d="M1 1v15l3.500-3 2.300 5.500 2.500-1L7 12h5z" fill="#ffffff" stroke="#000000" />
      </Pointer>
    </Shell>
  );
}
